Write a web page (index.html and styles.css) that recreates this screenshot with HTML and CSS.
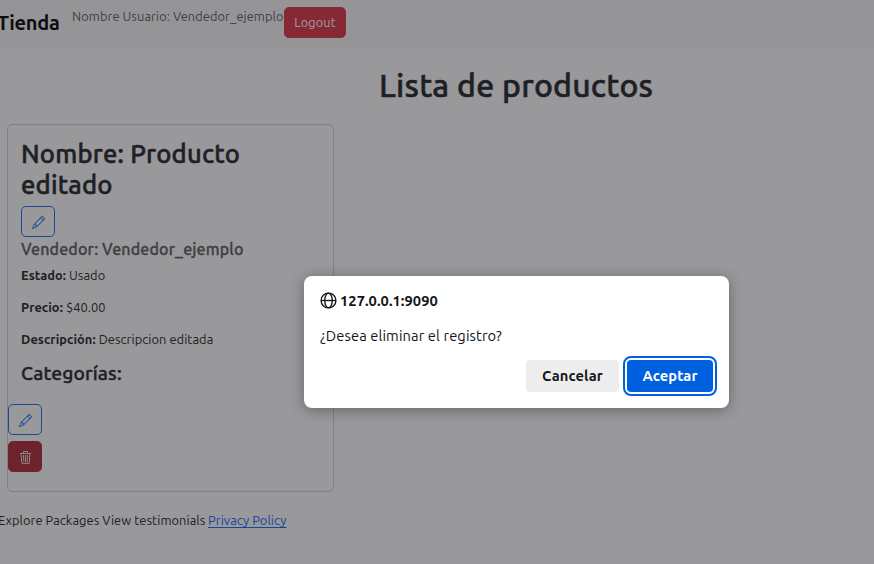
FILE: index.html
```html
<!DOCTYPE html>
<html lang="es">
<head>
<meta charset="utf-8">
<title>Tienda</title>
<link rel="stylesheet" href="styles.css">
</head>
<body>
<nav class="navbar">
  <span class="brand">Tienda</span>
  <span class="user">Nombre Usuario: Vendedor_ejemplo</span>
  <button class="btn logout">Logout</button>
</nav>
<main>
  <h1>Lista de productos</h1>
  <article class="card">
    <div class="card-body">
      <h2>Nombre: Producto<br>editado</h2>
      <button class="btn edit" aria-label="Editar"><svg viewBox="0 0 16 16"><path d="M12.146.146a.5.5 0 0 1 .708 0l3 3a.5.5 0 0 1 0 .708l-10 10a.5.5 0 0 1-.168.11l-5 2a.5.5 0 0 1-.65-.65l2-5a.5.5 0 0 1 .11-.168zM11.207 2.5 13.5 4.793 14.793 3.5 12.5 1.207zm1.586 3L10.5 3.207 4 9.707V10h.5a.5.5 0 0 1 .5.5v.5h.5a.5.5 0 0 1 .5.5v.5h.293zm-9.761 5.175-.106.106-1.528 3.821 3.821-1.528.106-.106A.5.5 0 0 1 5 12.5V12h-.5a.5.5 0 0 1-.5-.5V11h-.5a.5.5 0 0 1-.468-.325"/></svg></button>
      <h5>Vendedor: Vendedor_ejemplo</h5>
      <p><b>Estado:</b> Usado</p>
      <p><b>Precio:</b> $40.00</p>
      <p><b>Descripción:</b> Descripcion editada</p>
      <h4>Categorías:</h4>
    </div>
    <div class="actions">
      <button class="btn edit" aria-label="Editar"><svg viewBox="0 0 16 16"><path d="M12.146.146a.5.5 0 0 1 .708 0l3 3a.5.5 0 0 1 0 .708l-10 10a.5.5 0 0 1-.168.11l-5 2a.5.5 0 0 1-.65-.65l2-5a.5.5 0 0 1 .11-.168zM11.207 2.5 13.5 4.793 14.793 3.5 12.5 1.207zm1.586 3L10.5 3.207 4 9.707V10h.5a.5.5 0 0 1 .5.5v.5h.5a.5.5 0 0 1 .5.5v.5h.293zm-9.761 5.175-.106.106-1.528 3.821 3.821-1.528.106-.106A.5.5 0 0 1 5 12.5V12h-.5a.5.5 0 0 1-.5-.5V11h-.5a.5.5 0 0 1-.468-.325"/></svg></button>
      <button class="btn delete" aria-label="Eliminar"><svg viewBox="0 0 16 16"><path d="M6.5 1h3a.5.5 0 0 1 .5.5v1H6v-1a.5.5 0 0 1 .5-.5M11 2.5v-1A1.5 1.5 0 0 0 9.5 0h-3A1.5 1.5 0 0 0 5 1.5v1H1.5a.5.5 0 0 0 0 1h.538l.853 10.66A2 2 0 0 0 4.885 16h6.23a2 2 0 0 0 1.994-1.84l.853-10.66h.538a.5.5 0 0 0 0-1zm1.958 1-.846 10.58a1 1 0 0 1-.997.92h-6.23a1 1 0 0 1-.997-.92L3.042 3.5zm-7.487 1a.5.5 0 0 1 .528.47l.5 8.5a.5.5 0 0 1-.998.06L5 5.03a.5.5 0 0 1 .47-.53Zm5.058 0a.5.5 0 0 1 .47.53l-.5 8.5a.5.5 0 1 1-.998-.06l.5-8.5a.5.5 0 0 1 .528-.47M8 4.5a.5.5 0 0 1 .5.5v8.5a.5.5 0 0 1-1 0V5a.5.5 0 0 1 .5-.5"/></svg></button>
    </div>
  </article>
</main>
<footer><span class="explore">Explore Packages View testimonials</span><a class="privacy">Privacy Policy</a></footer>
<div class="overlay">
  <div class="dialog" role="dialog">
    <div class="origin"><svg viewBox="0 0 16 16"><g fill="none" stroke="currentColor" stroke-width="1.25"><circle cx="8" cy="8" r="7"/><ellipse cx="8" cy="8" rx="3.5" ry="7"/><path d="M1 8h14"/></g></svg><span class="host">127.0.0.1:9090</span></div>
    <div class="message">¿Desea eliminar el registro?</div>
    <div class="choices">
      <button class="cancel">Cancelar</button>
      <button class="accept">Aceptar</button>
    </div>
  </div>
</div>
</body>
</html>
```

FILE: styles.css
```css
* { box-sizing: border-box; }
body {
  margin: 0;
  height: 564px;
  overflow: hidden;
  position: relative;
  background: #fff;
  color: #212529;
  font: 12.8px/19.2px Ubuntu, "Noto Sans", sans-serif;
  letter-spacing: .08px;
  white-space: nowrap;
}
h1, h2, h4, h5, p { margin: 0; }
h1, h2, h4, h5 { font-weight: 500; -webkit-text-stroke: .5px currentColor; }
button { font-family: inherit; letter-spacing: inherit; white-space: nowrap; }
.navbar { display: flex; height: 48px; background: #f8f9fa; }
.brand { width: 75px; padding-top: 8px; margin-left: -3px; font-size: 20px; line-height: 29px; font-weight: 700; letter-spacing: -.25px; color: #000; }
.user { width: 212px; padding-top: 7px; color: #5c5e61; }
.btn {
  display: flex;
  align-items: center;
  justify-content: center;
  width: 34px;
  height: 31px;
  padding: 0;
  border: 1px solid #0d6efd;
  border-radius: 4.8px;
  background: none;
  color: #0d6efd;
}
.btn svg { width: 13px; height: 13px; margin-top: 2px; fill: currentColor; }
.logout { width: 62px; margin-top: 7px; padding-bottom: 1px; border-color: #dc3545; background: #dc3545; color: #fff; font-size: 12.8px; }
h1 { margin-top: 18px; padding-left: 379px; height: 58px; font-size: 32px; line-height: 38px; letter-spacing: .22px; }
.card { display: flex; flex-direction: column; width: 327px; height: 368px; margin-left: 7px; border: 1px solid #d2d2d2; border-radius: 5px; }
.card-body { height: 279px; padding: 13px 13px 0; }
h2 { height: 68px; font-size: 25.6px; line-height: 31px; letter-spacing: .2px; }
h5 { height: 22px; margin-top: 2px; font-size: 16px; line-height: 20px; color: #5c5e61; letter-spacing: .15px; -webkit-text-stroke-width: .3px; }
p { height: 32px; }
.card-body p:nth-of-type(1) { margin-top: 5px; }
h4 { font-size: 19.2px; line-height: 23px; letter-spacing: .15px; -webkit-text-stroke-width: .4px; }
.actions { display: flex; flex-direction: column; gap: 6px; }
.delete { background: #b02a37; border-color: #b02a37; color: #fff; }
footer { display: flex; margin-top: 19px; }
.explore { width: 210px; margin-left: -2px; }
.privacy { color: #0d6efd; text-decoration: underline; text-underline-offset: 2px; }
.overlay { position: absolute; inset: 0; background: rgba(28, 27, 34, .45); letter-spacing: 0; }
.dialog {
  width: 425px;
  height: 132px;
  margin: 276px 0 0 304px;
  padding: 16px 16px 0;
  border-radius: 8px;
  background: #fff;
  color: #15141a;
  box-shadow: 0 2px 14px rgba(28, 27, 34, .4);
  font-size: 14.67px;
  line-height: 18px;
}
.origin { display: flex; height: 35px; }
.origin svg { width: 17px; height: 17px; margin-right: 3px; }
.host { font-weight: 700; letter-spacing: .05px; }
.message { height: 33px; letter-spacing: .12px; }
.choices { display: flex; justify-content: flex-end; gap: 8px; }
.choices button { height: 32px; padding: 0 0 2px; border: 0; border-radius: 4px; font-size: 14.67px; font-weight: 700; letter-spacing: .1px; }
.cancel { width: 93px; background: #ededee; color: #15141a; }
.accept { width: 86px; background: #0061e0; color: #fff; outline: 2px solid #0061e0; outline-offset: 2px; }
```
